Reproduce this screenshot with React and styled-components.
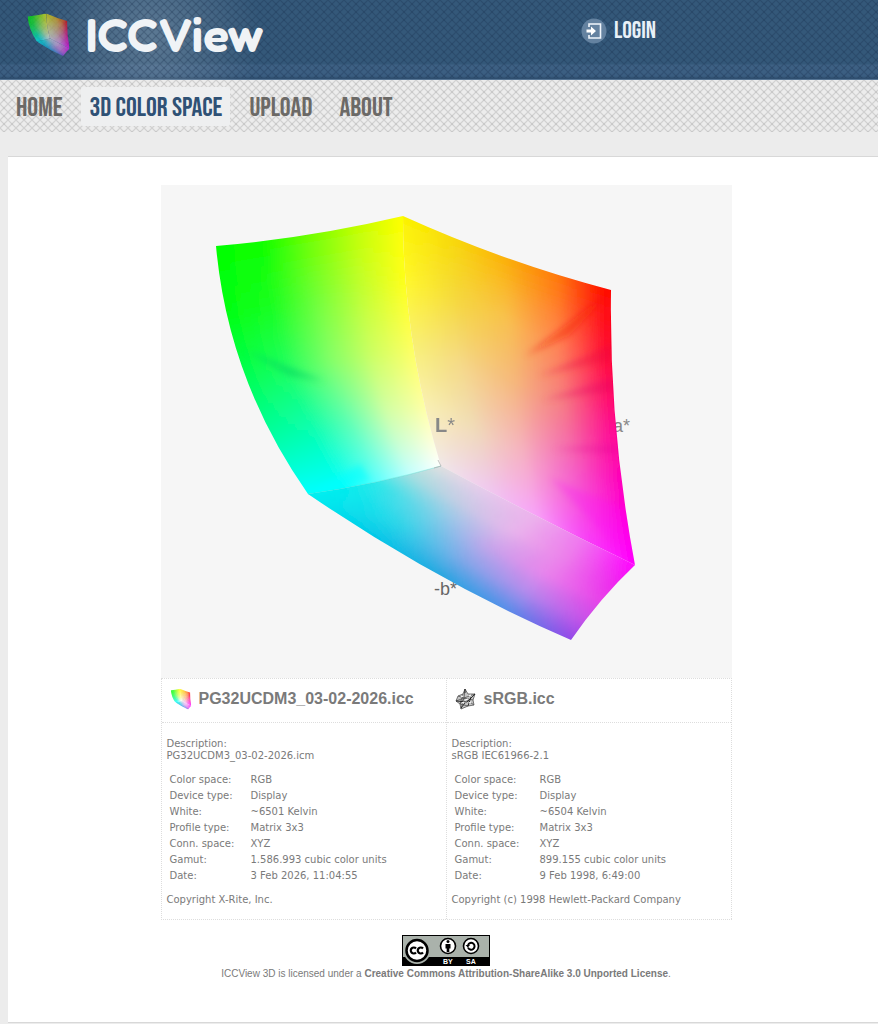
import React from 'react';
import styled, { createGlobalStyle, css } from 'styled-components';

const GlobalStyle = createGlobalStyle`
    *, *::before, *::after {
        box-sizing: border-box;
    }
    body {
        margin: 0;
        background: #ececec;
        color: #7a7a7a;
        font-family: Verdana, 'DejaVu Sans', sans-serif;
        font-size: 10px;
        line-height: 12px;
    }
    a {
        color: inherit;
        text-decoration: none;
    }
`;

const mesh = (color) => css`
    background-image: linear-gradient(45deg, transparent 40%, ${color} 50%, transparent 60%),
        linear-gradient(-45deg, transparent 40%, ${color} 50%, transparent 60%);
    background-size: 8px 8px;
`;
const condensed = css`
    font-family: 'Bebas Neue', 'Liberation Sans Narrow', 'Liberation Sans', sans-serif;
    font-weight: 400;
    text-transform: uppercase;
    white-space: nowrap;
`;

const Header = styled.header`
    height: 80px;
    background: radial-gradient(circle at 150px 36px, rgba(255, 255, 255, 0.2), transparent 110px),
        linear-gradient(#345879 0, #345879 64px, #3e6184 65px, #3a5d80 76px, #2c4b6b 79px, #7f9fbf 80px);
`;
const HeaderInner = styled.div`
    display: grid;
    grid-template-columns: 2fr 1fr;
    height: 78px;
    padding-left: 26px;
    ${mesh('rgba(20, 40, 70, 0.25)')}
`;
const Logo = styled.a`
    display: flex;
    align-items: center;
    gap: 15px;
    height: 68px;
    color: #f0f3f6;
    font-family: 'Fredoka', 'Nunito', 'Open Sans', 'Noto Sans', sans-serif;
    font-size: 48px;
    font-weight: 600;
    line-height: 68px;
`;
const Login = styled.a`
    display: flex;
    align-items: center;
    gap: 7px;
    height: 60px;
    margin-left: -13px;
    padding-top: 2px;
    color: #e8f0f8;
    font-size: 24px;
    line-height: 24px;
    ${condensed}
`;
const Nav = styled.nav`
    display: flex;
    align-items: center;
    gap: 11px;
    height: 52px;
    padding: 0 8px;
    background-color: #ececec;
    ${mesh('rgba(120, 120, 120, 0.24)')}
`;
const NavLink = styled.a`
    padding: 4px 8px 0;
    border-radius: 2px;
    background: ${({ $active }) => ($active ? '#eeeff0' : 'transparent')};
    color: ${({ $active }) => ($active ? '#2f5175' : '#6b6966')};
    font-size: 27px;
    line-height: 35px;
    ${condensed}
`;
const Panel = styled.main`
    margin: 24px 0 2px 8px;
    padding: 28px 0 42px 6px;
    border-top: 1px solid #d8d8d8;
    border-bottom: 1px solid #d8d8d8;
    background: #fff;
`;
const Viewer = styled.div`
    width: 100%;
    max-width: 571px;
    margin: 0 auto;
`;
const Stage = styled.svg`
    display: block;
    width: 100%;
    background: #f6f6f6;
`;
const Profiles = styled.div`
    display: grid;
    grid-template-columns: 1fr 1fr;
    border-left: 1px dotted #ddd;
    border-bottom: 1px dotted #ddd;
`;
const Profile = styled.section`
    border-top: 1px dotted #ddd;
    border-right: 1px dotted #ddd;
`;
const ProfileTitle = styled.h2`
    display: flex;
    align-items: center;
    gap: 7px;
    height: 44px;
    margin: 0;
    padding: 0 8px 4px;
    border-bottom: 1px dotted #ddd;
    font-family: Arial, 'Liberation Sans', sans-serif;
    font-size: 16px;
    line-height: 20px;
`;
const ProfileBody = styled.div`
    padding: 15px 5px 13px;
`;
const Text = styled.p`
    margin: 0;
`;
const Facts = styled.table`
    margin: 10px 0;
    border-spacing: 0;
    th,
    td {
        height: 16px;
        padding: 0 3px;
        font-weight: 400;
        line-height: 16px;
        text-align: left;
    }
    th {
        width: ${({ $wide }) => ($wide ? '85px' : '81px')};
        padding-right: 0;
    }
`;
const License = styled.footer`
    display: flex;
    flex-direction: column;
    align-items: center;
    gap: 2px;
    margin-top: 15px;
    font-family: Arial, 'Liberation Sans', sans-serif;
`;

// gamut hull: three visible faces, each spanned by four curved edges
const V = {
    G: [216, 246], Y: [403, 216], R: [611, 290], W: [441, 466],
    C: [308, 494], M: [635, 565], B: [571, 640],
};
const faces = [
    {
        id: 'green',
        top: [V.G, [310, 238], V.Y], bottom: [V.C, [378, 484], V.W],
        left: [V.G, [228, 380], V.C], right: [V.Y, [403, 341], V.W],
        colors: [
            '00ff00 10ff00 70ff00 c0ff00 ffff00',
            '00ff10 18ff20 70ff38 c0ff30 ffff18',
            '00ff50 20ff60 80ff68 ccff60 ffff58',
            '00ffa0 08ffb0 60ffb4 d0ffa8 ffffa0',
            '00ffff 00ffff 58ffff c0ffff ffffff',
        ],
    },
    {
        id: 'red',
        top: [V.Y, [507, 263], V.R], bottom: [V.W, [538, 518], V.M],
        left: [V.Y, [403, 341], V.W], right: [V.R, [609, 428], V.M],
        colors: [
            'fcf400 f8d808 fbb008 ff7808 ff0000',
            'fff828 f5d840 f8c050 ff8050 ff0038',
            'f8f070 f5d888 f5b880 f57888 ff0090',
            'faf0b0 f0dcb8 f5b0c0 f560c8 ff00c8',
            'f0e8e8 f0c8f0 f8a0f8 f840f8 ff00ff',
        ],
    },
    {
        id: 'blue',
        top: [V.C, [437, 582], V.B], bottom: [V.W, [538, 518], V.M],
        left: [V.C, [378, 484], V.W], right: [V.B, [600, 598], V.M],
        colors: [
            '00f0f0 00c8e8 20a8e0 5090e8 9048e8',
            '00ecee 30d4e8 80a8e8 b08cec c850e8',
            '28e8e8 78d0e8 c4a6ea e884ec e840e8',
            'a0e0e0 c4cce4 e8b4ec ec80ea f020f0',
            'e0e0e0 e8c8ec ecb0ec f070f0 ff00ff',
        ],
    },
];
const STEPS = 32;

const curve = ([a, b, c], t) =>
    [0, 1].map((i) => (1 - t) * (1 - t) * a[i] + 2 * t * (1 - t) * b[i] + t * t * c[i]);

const coons = ({ top, bottom, left, right }, u, v) => {
    const t = curve(top, u);
    const b = curve(bottom, u);
    const l = curve(left, v);
    const r = curve(right, v);
    return [0, 1].map((i) =>
        (1 - v) * t[i] + v * b[i] + (1 - u) * l[i] + u * r[i]
        - ((1 - u) * (1 - v) * top[0][i] + u * (1 - v) * top[2][i]
        + (1 - u) * v * bottom[0][i] + u * v * bottom[2][i]));
};

const clamp = (n) => Math.max(0, Math.min(1, n));

const shade = (grid, u, v) => {
    const x = Math.min(Math.floor(u * 4), 3);
    const y = Math.min(Math.floor(v * 4), 3);
    const fx = u * 4 - x;
    const fy = v * 4 - y;
    const rgb = [0, 1, 2].map((i) => Math.round(
        grid[y][x][i] * (1 - fx) * (1 - fy) + grid[y][x + 1][i] * fx * (1 - fy)
        + grid[y + 1][x][i] * (1 - fx) * fy + grid[y + 1][x + 1][i] * fx * fy));
    return `rgb(${rgb.join(',')})`;
};

// the cells run past the face on every side, the outline clips them
const buildCells = (face) => {
    const grid = face.colors.map((row) =>
        row.split(' ').map((hex) => [0, 2, 4].map((i) => parseInt(hex.slice(i, i + 2), 16))));
    const cells = [];
    for (let j = -3; j < STEPS + 3; j += 1) {
        for (let i = -3; i < STEPS + 3; i += 1) {
            const points = [[i, j], [i + 1, j], [i + 1, j + 1], [i, j + 1]]
                .map(([x, y]) => coons(face, x / STEPS, y / STEPS).map((n) => n.toFixed(2)).join(','))
                .join(' ');
            const fill = shade(grid, clamp((i + 0.5) / STEPS), clamp((j + 0.5) / STEPS));
            cells.push({ points, fill });
        }
    }
    return cells;
};

const outline = ({ top, bottom, left, right }) =>
    `M${top[0]}Q${top[1]} ${top[2]}Q${right[1]} ${right[2]}Q${bottom[1]} ${bottom[0]}Q${left[1]} ${left[0]}Z`;

const hull = faces.map((face) => ({ id: face.id, cells: buildCells(face), path: outline(face) }));

const Hull = ({ name }) => (
    <>
        <defs>
            <filter id={`${name}-blend`} filterUnits="userSpaceOnUse" x="150" y="150" width="560" height="560">
                <feGaussianBlur stdDeviation="3" />
            </filter>
            {hull.map(({ id, path }) => (
                <clipPath key={id} id={`${name}-${id}`}>
                    <path d={path} />
                </clipPath>
            ))}
        </defs>
        {hull.map(({ id, cells }) => (
            <g key={id} clipPath={`url(#${name}-${id})`}>
                <g filter={`url(#${name}-blend)`} strokeWidth="1">
                    {cells.map(({ points, fill }) => (
                        <polygon key={points} points={points} fill={fill} stroke={fill} />
                    ))}
                </g>
            </g>
        ))}
    </>
);

const Gamut = () => (
    <Stage viewBox="161 185 571 493" role="img" aria-label="3D color space">
        <defs>
            <filter id="soften" x="-20%" y="-50%" width="140%" height="200%">
                <feGaussianBlur stdDeviation="3" />
            </filter>
            <clipPath id="hull-outline">
                {hull.map(({ id, path }) => <path key={id} d={path} />)}
            </clipPath>
        </defs>
        <g fill="#888" fontFamily="Arial, 'Liberation Sans', sans-serif" fontSize="18">
            <text x="613" y="432">a*</text>
            <text x="434" y="595" fill="#666">-b*</text>
        </g>
        <Hull name="stage" />
        <g clipPath="url(#hull-outline)">
            <g filter="url(#soften)">
                <path d="M612 290L525 356L570 335Z" fill="#f01800" opacity="0.4" />
                <path d="M614 344L538 376L612 360Z" fill="#e80040" opacity="0.3" />
                <path d="M614 378L542 400L614 391Z" fill="#e00060" opacity="0.3" />
                <path d="M618 444L552 449L618 454Z" fill="#e00090" opacity="0.25" />
                <path d="M550 478L632 562L628 510Z" fill="#ff00ff" opacity="0.2" />
                <path d="M245 350L324 381L290 376Z" fill="#00d060" opacity="0.55" />
                <path d="M308 494L360 464L370 480Z" fill="#00ffff" opacity="0.5" />
            </g>
        </g>
        <path d="M308 494Q378 484 441 466" fill="none" stroke="#3dc" strokeWidth="1" opacity="0.3" />
        <path d="M434 468L441 466L438 460" fill="none" stroke="#aaa" strokeWidth="1" opacity="0.7" />
        <text x="435" y="432" fill="#888" fontFamily="Arial, 'Liberation Sans', sans-serif" fontSize="20">
            <tspan fontWeight="700">L</tspan>*
        </text>
    </Stage>
);

const GamutIcon = ({ name, size, faded }) => (
    <svg width={size} height={size} viewBox="200 200 450 450" opacity={faded ? 0.75 : 1} aria-hidden="true">
        <Hull name={name} />
    </svg>
);

const LoginIcon = () => (
    <svg width="26" height="26" viewBox="0 0 26 26" fill="none" aria-hidden="true">
        <circle cx="13" cy="13" r="12.5" fill="#6482a0" />
        <path d="M8 9V6h11.500v14H8v-3" stroke="#f0f6fc" strokeWidth="1.600" />
        <path d="M5.500 11.500h4.500V8.500l5 4.500-5 4.500v-3H5.500Z" fill="#fff" />
    </svg>
);

const WireIcon = () => (
    <svg width="22" height="22" viewBox="0 0 22 22" fill="none" stroke="#555" strokeWidth="0.8" aria-hidden="true">
        <path d="M10 1L13 6L20 6L18 12L19 17L13 18L6 21L5 16L1 13L3 8L8 6Z" fill="#c4c4c4" />
        <path d="M10 1L9 10L3 8M9 10L20 6M9 10L1 13M9 10L18 12M8 6L5 16L13 18M9 10L19 17M5 16L9 10L6 21" />
        <path d="M12 14L20 6M12 14L1 13M13 18L16 9M10 1L10 5M6 20L10 15" stroke="#111" />
        <path d="M6 9L8 8M14 8L16 7M7 15L9 14M14 15L16 14M10 12L13 11" stroke="#fff" strokeWidth="1.2" />
    </svg>
);

const CcBadge = () => (
    <svg width="88" height="31" viewBox="0 0 88 31" role="img" aria-label="Creative Commons BY-SA">
        <rect x="0.5" y="0.5" width="87" height="30" fill="#aab2ab" stroke="#000" />
        <rect y="22" width="88" height="9" fill="#000" />
        <circle cx="15" cy="15.500" r="13.500" fill="#aab2ab" />
        <circle cx="15" cy="15.500" r="10.500" fill="#fff" stroke="#000" strokeWidth="2.500" />
        <path
            d="M14 13.500a3 3 0 1 0 0 4M21 13.500a3 3 0 1 0 0 4"
            fill="none"
            stroke="#000"
            strokeWidth="2.200"
        />
        <circle cx="46" cy="11" r="7.500" fill="#fff" stroke="#000" strokeWidth="1.600" />
        <circle cx="46" cy="6.500" r="1.500" />
        <path d="M43.500 9h5v4.500h-1.200v3.500h-2.600v-3.500h-1.200Z" />
        <circle cx="69" cy="11" r="7.500" fill="#fff" stroke="#000" strokeWidth="1.600" />
        <path d="M66 10a3.400 3.400 0 1 1 0 2.500" fill="none" stroke="#000" strokeWidth="2" />
        <path d="M63.500 10h4.500l-2.200 2.500Z" />
        <g fill="#fff" fontFamily="Arial, 'Liberation Sans', sans-serif" fontSize="7" fontWeight="700">
            <text x="41" y="29">BY</text>
            <text x="64" y="29">SA</text>
        </g>
    </svg>
);

const menu = ['Home', '3D Color Space', 'Upload', 'About'];

const profiles = [
    {
        file: 'PG32UCDM3_03-02-2026.icc',
        icon: <GamutIcon name="title" size={22} />,
        description: 'PG32UCDM3_03-02-2026.icm',
        facts: [
            ['Color space:', 'RGB'],
            ['Device type:', 'Display'],
            ['White:', '~6501 Kelvin'],
            ['Profile type:', 'Matrix 3x3'],
            ['Conn. space:', 'XYZ'],
            ['Gamut:', '1.586.993 cubic color units'],
            ['Date:', '3 Feb 2026, 11:04:55'],
        ],
        copyright: 'Copyright X-Rite, Inc.',
    },
    {
        file: 'sRGB.icc',
        icon: <WireIcon />,
        description: 'sRGB IEC61966-2.1',
        facts: [
            ['Color space:', 'RGB'],
            ['Device type:', 'Display'],
            ['White:', '~6504 Kelvin'],
            ['Profile type:', 'Matrix 3x3'],
            ['Conn. space:', 'XYZ'],
            ['Gamut:', '899.155 cubic color units'],
            ['Date:', '9 Feb 1998, 6:49:00'],
        ],
        copyright: 'Copyright (c) 1998 Hewlett-Packard Company',
    },
];

const App = () => (
    <>
        <GlobalStyle />
        <Header>
            <HeaderInner>
                <Logo href="#home">
                    <GamutIcon name="logo" size={45} faded />
                    ICCView
                </Logo>
                <Login href="#login">
                    <LoginIcon />
                    Login
                </Login>
            </HeaderInner>
        </Header>
        <Nav>
            {menu.map((item) => (
                <NavLink key={item} href="#menu" $active={item === '3D Color Space'}>{item}</NavLink>
            ))}
        </Nav>
        <Panel>
            <Viewer>
                <Gamut />
                <Profiles>
                    {profiles.map(({ file, icon, description, facts, copyright }, index) => (
                        <Profile key={file}>
                            <ProfileTitle>{icon}{file}</ProfileTitle>
                            <ProfileBody>
                                <Text>Description:<br />{description}</Text>
                                <Facts $wide={index === 1}>
                                    <tbody>
                                        {facts.map(([label, value]) => (
                                            <tr key={label}>
                                                <th scope="row">{label}</th>
                                                <td>{value}</td>
                                            </tr>
                                        ))}
                                    </tbody>
                                </Facts>
                                <Text>{copyright}</Text>
                            </ProfileBody>
                        </Profile>
                    ))}
                </Profiles>
            </Viewer>
            <License>
                <CcBadge />
                <Text>
                    ICCView 3D is licensed under a{' '}
                    <a href="#license"><b>Creative Commons Attribution-ShareAlike 3.0 Unported License</b></a>.
                </Text>
            </License>
        </Panel>
    </>
);

export default App;
